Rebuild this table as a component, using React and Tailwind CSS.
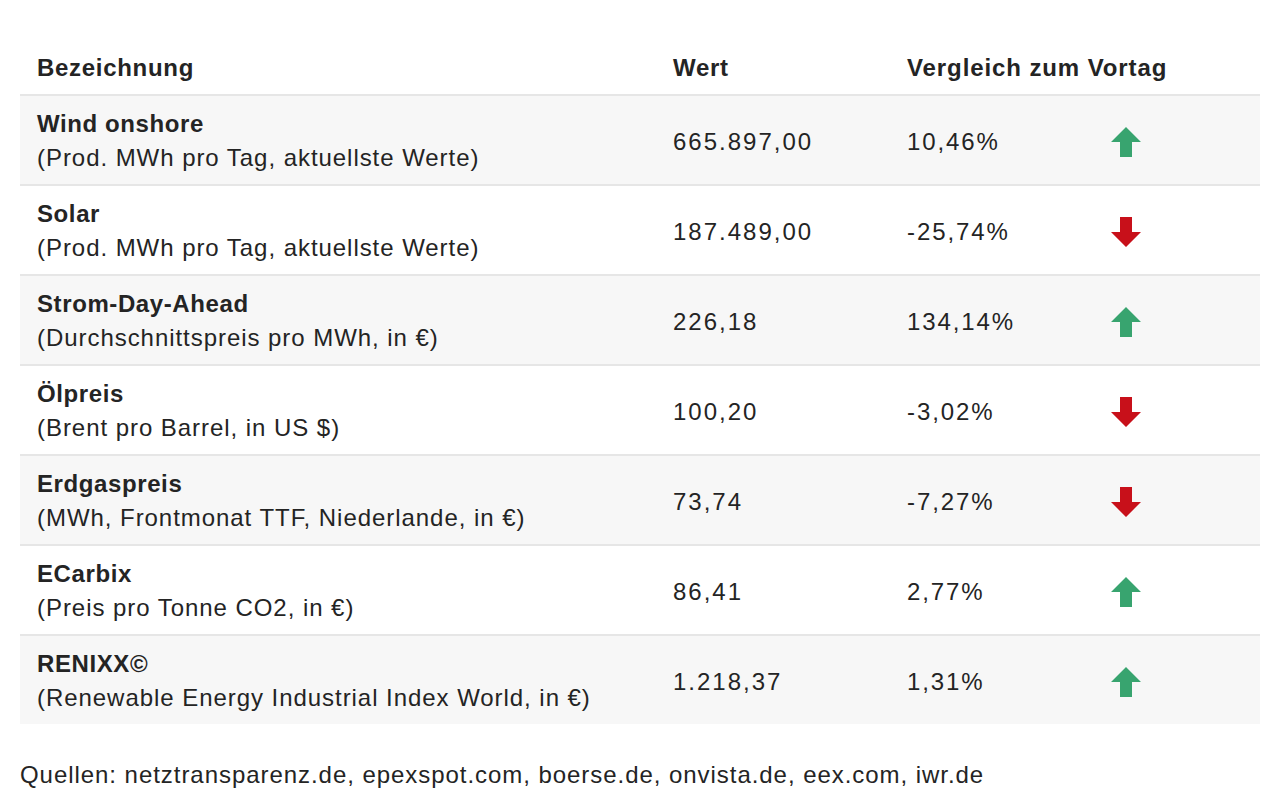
const rows = [
  { name: 'Wind onshore', sub: '(Prod. MWh pro Tag, aktuellste Werte)', value: '665.897,00', change: '10,46%', up: true },
  { name: 'Solar', sub: '(Prod. MWh pro Tag, aktuellste Werte)', value: '187.489,00', change: '-25,74%', up: false },
  { name: 'Strom-Day-Ahead', sub: '(Durchschnittspreis pro MWh, in €)', value: '226,18', change: '134,14%', up: true },
  { name: 'Ölpreis', sub: '(Brent pro Barrel, in US $)', value: '100,20', change: '-3,02%', up: false },
  { name: 'Erdgaspreis', sub: '(MWh, Frontmonat TTF, Niederlande, in €)', value: '73,74', change: '-7,27%', up: false },
  { name: 'ECarbix', sub: '(Preis pro Tonne CO2, in €)', value: '86,41', change: '2,77%', up: true },
  { name: 'RENIXX©', sub: '(Renewable Energy Industrial Index World, in €)', value: '1.218,37', change: '1,31%', up: true },
]

function Arrow({ up }) {
  return (
    <svg width="30" height="30" viewBox="0 0 30 30" className="block">
      {up ? (
        <polygon points="15,0 30,15 21,15 21,30 9,30 9,15 0,15" fill="#38a46f" />
      ) : (
        <polygon points="9,0 21,0 21,15 30,15 15,30 0,15 9,15" fill="#c8101a" />
      )}
    </svg>
  )
}

export default function App() {
  return (
    <div
      className="min-h-screen bg-white px-5 pt-10 text-[#242424]"
      style={{ fontFamily: '"Liberation Sans", Arial, sans-serif' }}
    >
      <div className="grid grid-cols-[636px_234px_204px_1fr] text-[24px] leading-[34px] tracking-[0.95px]">
        <div className="border-b-2 border-[#e6e6e6] px-[17px] pb-[9px] pt-[11px] font-bold tracking-[0.7px]">Bezeichnung</div>
        <div className="border-b-2 border-[#e6e6e6] px-[17px] pb-[9px] pt-[11px] font-bold tracking-[0.7px]">Wert</div>
        <div className="col-span-2 border-b-2 border-[#e6e6e6] px-[17px] pb-[9px] pt-[11px] font-bold tracking-[0.9px]">
          Vergleich zum Vortag
        </div>
        {rows.map((r, i) => {
          const bg = i % 2 === 0 ? 'bg-[#f7f7f7]' : 'bg-white'
          const border = i < rows.length - 1 ? 'border-b-2 border-[#e6e6e6]' : ''
          return [
            <div key={r.name + 'a'} className={`${bg} ${border} px-[17px] pb-[9px] pt-[11px]`}>
              <div className="font-bold tracking-[0.6px]">{r.name}</div>
              <div>{r.sub}</div>
            </div>,
            <div key={r.name + 'b'} className={`${bg} ${border} flex items-center px-[17px] pt-[3px] tracking-[2px]`}>
              {r.value}
            </div>,
            <div key={r.name + 'c'} className={`${bg} ${border} flex items-center px-[17px] pt-[3px] tracking-[1.9px]`}>
              {r.change}
            </div>,
            <div key={r.name + 'd'} className={`${bg} ${border} flex items-center px-[17px] pt-[3px]`}>
              <Arrow up={r.up} />
            </div>,
          ]
        })}
      </div>
      <p className="mt-[34px] text-[24px] leading-[34px] tracking-[0.95px]">
        Quellen: netztransparenz.de, epexspot.com, boerse.de, onvista.de, eex.com, iwr.de
      </p>
    </div>
  )
}
